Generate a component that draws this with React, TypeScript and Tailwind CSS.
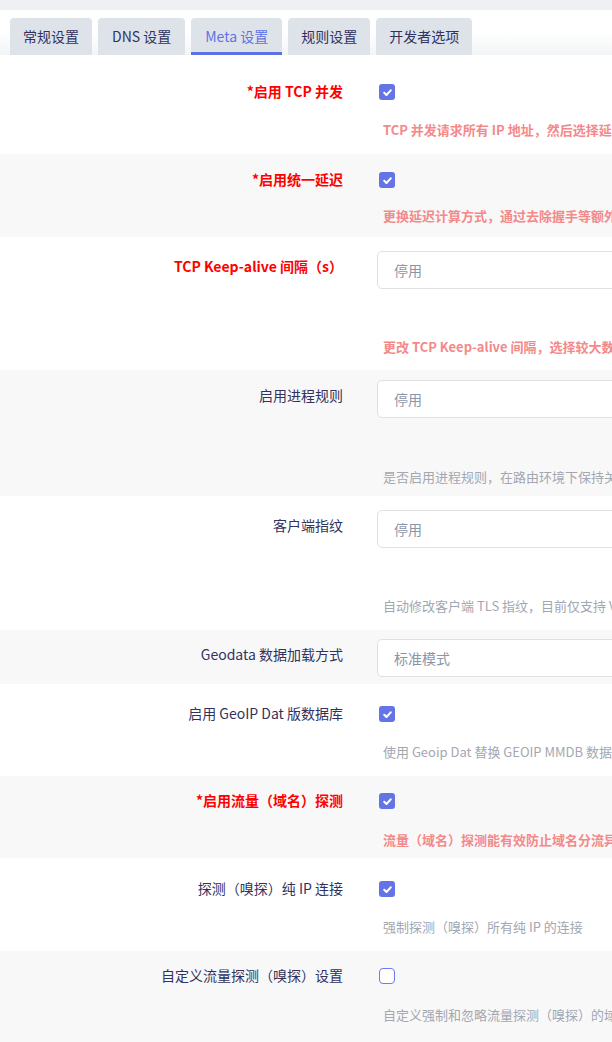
import React from "react"

type Row = {
  label: string
  red?: boolean
  control: "on" | "off" | "input"
  value?: string
  desc?: string
  descRed?: boolean
  gray?: boolean
  pt: string
  gap?: string
  pb: string
}

const tabs = ["常规设置", "DNS 设置", "Meta 设置", "规则设置", "开发者选项"]

const rows: Row[] = [
  { label: "*启用 TCP 并发", red: true, control: "on", desc: "TCP 并发请求所有 IP 地址，然后选择延迟最低的地址进行连接", descRed: true, pt: "pt-[29px]", gap: "mt-[20px]", pb: "pb-[14px]" },
  { label: "*启用统一延迟", red: true, control: "on", desc: "更换延迟计算方式，通过去除握手等额外延迟来降低测试结果", descRed: true, gray: true, pt: "pt-[18px]", gap: "mt-[18px]", pb: "pb-[11px]" },
  { label: "TCP Keep-alive 间隔（s）", red: true, control: "input", value: "停用", desc: "更改 TCP Keep-alive 间隔，选择较大数值可降低耗电", descRed: true, pt: "pt-[14px]", gap: "mt-[48px]", pb: "pb-[13px]" },
  { label: "启用进程规则", control: "input", value: "停用", desc: "是否启用进程规则，在路由环境下保持关闭可提升性能", gray: true, pt: "pt-[10px]", gap: "mt-[49px]", pb: "pb-[9px]" },
  { label: "客户端指纹", control: "input", value: "停用", desc: "自动修改客户端 TLS 指纹，目前仅支持 VLESS、Trojan", pt: "pt-[14px]", gap: "mt-[48px]", pb: "pb-[14px]" },
  { label: "Geodata 数据加载方式", control: "input", value: "标准模式", gray: true, pt: "pt-[9px]", pb: "pb-[7px]" },
  { label: "启用 GeoIP Dat 版数据库", control: "on", desc: "使用 Geoip Dat 替换 GEOIP MMDB 数据库", pt: "pt-[22px]", gap: "mt-[20px]", pb: "pb-[14px]" },
  { label: "*启用流量（域名）探测", red: true, control: "on", desc: "流量（域名）探测能有效防止域名分流异常", descRed: true, gray: true, pt: "pt-[17px]", gap: "mt-[21px]", pb: "pb-[8px]" },
  { label: "探测（嗅探）纯 IP 连接", control: "on", desc: "强制探测（嗅探）所有纯 IP 的连接", pt: "pt-[23px]", gap: "mt-[20px]", pb: "pb-[14px]" },
  { label: "自定义流量探测（嗅探）设置", control: "off", desc: "自定义强制和忽略流量探测（嗅探）的域名", gray: true, pt: "pt-[17px]", gap: "mt-[21px]", pb: "pb-[20px]" },
]

function Check({ on }: { on: boolean }) {
  if (!on)
    return <div className="ml-[2px] h-4 w-4 rounded-[4px] border-[1.5px] border-[#6b7cf0] bg-white" />
  return (
    <div className="ml-[2px] flex h-4 w-4 items-center justify-center rounded-[3px] bg-[#6474e5]">
      <svg viewBox="0 0 16 16" className="h-[13px] w-[13px]" fill="none">
        <path d="M4 8.4l2.7 2.6 5.3-5.6" stroke="white" strokeWidth="2.6" strokeLinecap="round" strokeLinejoin="round" />
      </svg>
    </div>
  )
}

export default function App() {
  return (
    <div
      className="min-h-[1042px] w-full overflow-hidden bg-white"
      style={{ fontFamily: '"Noto Sans CJK SC", "Noto Sans", sans-serif' }}
    >
      <div className="h-[10px] bg-[#eef0f3]" />
      <div className="flex gap-[6px] bg-gradient-to-b from-white from-50% to-[#f3f4f6] px-[10px] pt-[8px]">
        {tabs.map((t, i) => (
          <div
            key={t}
            className={
              i === 2
                ? "flex h-[37px] items-center rounded-t-[4px] border-b-[3px] border-[#5e72e4] bg-[#dee3ea] px-[14px] pt-[3px] text-[14px] text-[#5e72e4]"
                : i === 1
                  ? "flex h-[37px] items-center rounded-t-[4px] bg-[#dee3ea] px-[14px] text-[14px] text-[#32325d]"
                  : "flex h-[37px] items-center rounded-t-[4px] bg-[#dee3ea] px-[13px] text-[14px] text-[#32325d]"
            }
          >
            {t}
          </div>
        ))}
      </div>

      {rows.map((r) => (
        <div key={r.label} className={`flex items-start ${r.pt} ${r.pb} ${r.gray ? "bg-[#f8f8f9]" : "bg-white"}`}>
          <div
            className={`w-[343px] shrink-0 whitespace-nowrap text-right text-[14px] leading-5 ${
              r.control === "input" ? "mt-[5px]" : "-mt-[3px]"
            } ${r.red ? "font-bold text-[#ff0000]" : "text-[#32325d]"}`}
          >
            {r.label}
          </div>
          <div className="ml-[34px] flex min-w-0 flex-1 flex-col">
            {r.control === "input" ? (
              <div className="flex h-[38px] w-[320px] items-center rounded-[5px] border border-[#dde1e6] bg-white pl-4 text-[14px] text-[#8a96a8]">
                {r.value}
              </div>
            ) : (
              <Check on={r.control === "on"} />
            )}
            {r.desc && (
              <div
                className={`${r.gap} whitespace-nowrap pl-[6px] text-[13px] leading-5 ${
                  r.descRed ? "font-bold text-[#f48989]" : "text-[#a3a7b0]"
                }`}
              >
                {r.desc}
              </div>
            )}
          </div>
        </div>
      ))}
    </div>
  )
}
